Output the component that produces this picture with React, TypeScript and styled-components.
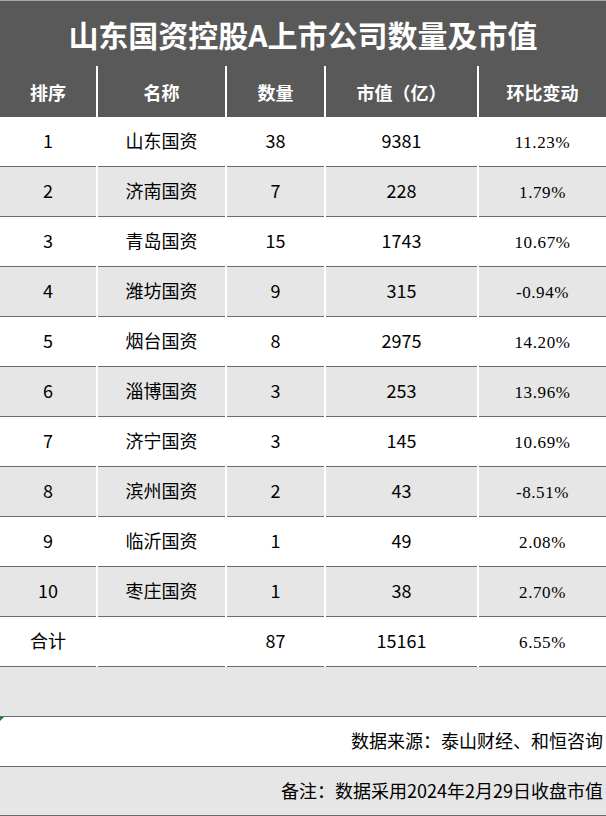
import React from "react";
import styled, { createGlobalStyle } from "styled-components";

const Global = createGlobalStyle`
  html, body { margin: 0; padding: 0; background: #ffffff; }
  body { font-family: "Noto Sans CJK SC", "Noto Sans", sans-serif; }
`;

const Sheet = styled.div`
  width: 606px;
  height: 816px;
  overflow: hidden;
  background: #ffffff;
`;

const Title = styled.h1`
  margin: 0;
  height: 65px;
  border-top: 1px solid #a6a6a6;
  background: #595959;
  color: #ffffff;
  font-family: "Noto Sans CJK SC", sans-serif;
  font-weight: 700;
  font-size: 30px;
  display: flex;
  align-items: center;
  justify-content: center;
`;

const Grid = styled.div`
  display: grid;
  grid-template-columns: 96px 127px 97px 151px 127px;
  column-gap: 2px;
  background: #ffffff;
`;

const HeadCell = styled.div`
  height: 51px;
  background: #595959;
  color: #ffffff;
  font-weight: 700;
  font-size: 18px;
  display: flex;
  align-items: center;
  justify-content: center;
`;

const Cell = styled.div<{ $shade: boolean; $kind?: "text" | "pct" }>`
  height: 50px;
  box-sizing: border-box;
  border-bottom: 1px solid #6b6b6b;
  background: ${(p) => (p.$shade ? "#e6e6e6" : "#ffffff")};
  color: #000000;
  display: flex;
  align-items: center;
  justify-content: center;
  font-family: ${(p) =>
    p.$kind === "pct"
      ? '"Liberation Serif", "Noto Sans CJK SC", serif'
      : '"Noto Sans CJK SC", sans-serif'};
  font-size: ${(p) => (p.$kind === "pct" ? "17px" : "18px")};
  letter-spacing: ${(p) => (p.$kind === "pct" ? "0.6px" : "0")};
  padding-top: ${(p) => (p.$kind === "pct" ? "3px" : "0")};
  padding-bottom: ${(p) => (p.$kind === "pct" ? "0" : "3px")};
`;

const WideRow = styled.div<{ $shade: boolean; $last?: boolean }>`
  grid-column: 1 / -1;
  position: relative;
  height: ${(p) => (p.$last ? "49px" : "50px")};
  box-sizing: border-box;
  border-bottom: 1px solid #6b6b6b;
  background: ${(p) => (p.$shade ? "#e6e6e6" : "#ffffff")};
  color: #000000;
  font-size: 18px;
  display: flex;
  align-items: center;
  justify-content: flex-end;
  padding-right: 3px;
  padding-bottom: 3px;
`;

const Marker = styled.span`
  position: absolute;
  left: 0;
  top: 0;
  width: 0;
  height: 0;
  border-top: 4px solid #1f7a2a;
  border-right: 4px solid transparent;
`;

type Row = [string, string, string, string, string];

const rows: Row[] = [
  ["1", "山东国资", "38", "9381", "11.23%"],
  ["2", "济南国资", "7", "228", "1.79%"],
  ["3", "青岛国资", "15", "1743", "10.67%"],
  ["4", "潍坊国资", "9", "315", "-0.94%"],
  ["5", "烟台国资", "8", "2975", "14.20%"],
  ["6", "淄博国资", "3", "253", "13.96%"],
  ["7", "济宁国资", "3", "145", "10.69%"],
  ["8", "滨州国资", "2", "43", "-8.51%"],
  ["9", "临沂国资", "1", "49", "2.08%"],
  ["10", "枣庄国资", "1", "38", "2.70%"],
  ["合计", "", "87", "15161", "6.55%"],
];

const heads = ["排序", "名称", "数量", "市值（亿）", "环比变动"];

export default function App() {
  return (
    <Sheet>
      <Global />
      <Title>山东国资控股A上市公司数量及市值</Title>
      <Grid>
        {heads.map((h) => (
          <HeadCell key={h}>{h}</HeadCell>
        ))}
        {rows.map((r, i) => {
          const shade = i % 2 === 1;
          return (
            <React.Fragment key={i}>
              {r.map((v, j) => (
                <Cell key={j} $shade={shade} $kind={j === 4 ? "pct" : "text"}>
                  {v}
                </Cell>
              ))}
            </React.Fragment>
          );
        })}
        <WideRow $shade={true} />
        <WideRow $shade={false}>
          <Marker />
          数据来源：泰山财经、和恒咨询
        </WideRow>
        <WideRow $shade={true} $last>
          备注：数据采用2024年2月29日收盘市值
        </WideRow>
      </Grid>
    </Sheet>
  );
}
